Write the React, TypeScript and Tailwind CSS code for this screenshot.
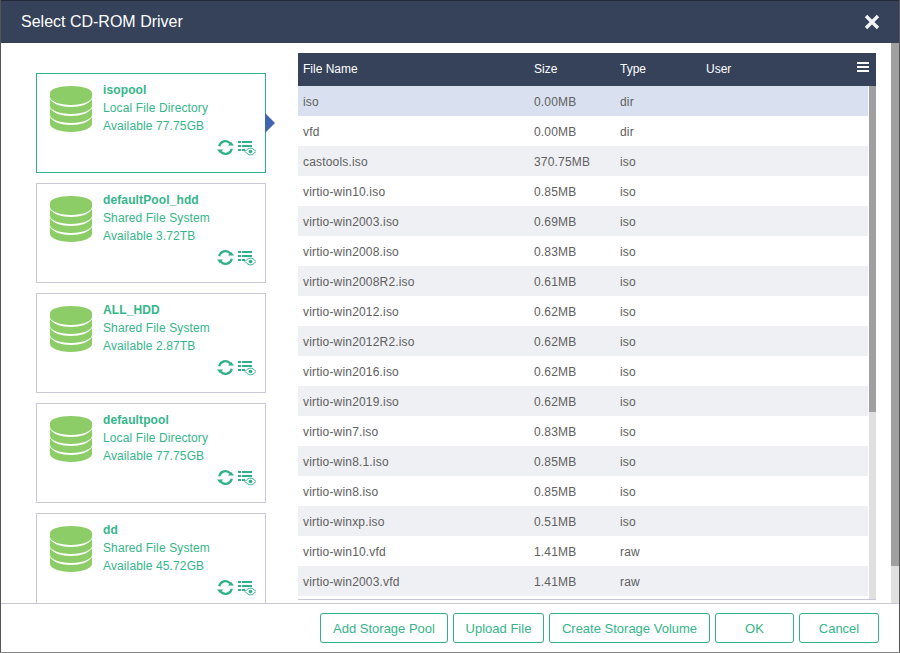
import React from "react";

const pools = [
  { name: "isopool", kind: "Local File Directory", avail: "Available 77.75GB", active: true },
  { name: "defaultPool_hdd", kind: "Shared File System", avail: "Available 3.72TB" },
  { name: "ALL_HDD", kind: "Shared File System", avail: "Available 2.87TB" },
  { name: "defaultpool", kind: "Local File Directory", avail: "Available 77.75GB" },
  { name: "dd", kind: "Shared File System", avail: "Available 45.72GB" },
];

const files = [
  ["iso", "0.00MB", "dir"],
  ["vfd", "0.00MB", "dir"],
  ["castools.iso", "370.75MB", "iso"],
  ["virtio-win10.iso", "0.85MB", "iso"],
  ["virtio-win2003.iso", "0.69MB", "iso"],
  ["virtio-win2008.iso", "0.83MB", "iso"],
  ["virtio-win2008R2.iso", "0.61MB", "iso"],
  ["virtio-win2012.iso", "0.62MB", "iso"],
  ["virtio-win2012R2.iso", "0.62MB", "iso"],
  ["virtio-win2016.iso", "0.62MB", "iso"],
  ["virtio-win2019.iso", "0.62MB", "iso"],
  ["virtio-win7.iso", "0.83MB", "iso"],
  ["virtio-win8.1.iso", "0.85MB", "iso"],
  ["virtio-win8.iso", "0.85MB", "iso"],
  ["virtio-winxp.iso", "0.51MB", "iso"],
  ["virtio-win10.vfd", "1.41MB", "raw"],
  ["virtio-win2003.vfd", "1.41MB", "raw"],
];

function DbIcon() {
  return (
    <svg width="42" height="46" viewBox="0 0 42 46" className="shrink-0">
      <path d="M0 7C0 3 9 0 21 0s21 3 21 7v4c0 4-9 8-21 8S0 15 0 11z" fill="#8ccd68" />
      <path d="M0 13c3 5 11 8 21 8s18-3 21-8v7c0 4-9 8-21 8S0 24 0 20z" fill="#8ccd68" />
      <path d="M0 22c3 5 11 8 21 8s18-3 21-8v7c0 4-9 8-21 8S0 33 0 29z" fill="#8ccd68" />
      <path d="M0 31c3 5 11 8 21 8s18-3 21-8v7c0 4-9 8-21 8S0 42 0 38z" fill="#8ccd68" />
    </svg>
  );
}

function RefreshIcon() {
  return (
    <svg width="17" height="17" viewBox="0 0 17 17" fill="none">
      <path d="M2.2 7.2A6.400 6.400 0 0 1 13.2 4.2" stroke="#2fb088" strokeWidth="2.2" />
      <path d="M14.8 9.8A6.400 6.400 0 0 1 3.8 12.8" stroke="#2fb088" strokeWidth="2.2" />
      <path d="M11 6.500h6L14 2.800z" fill="#2fb088" />
      <path d="M0 10.500h6L3 14.200z" fill="#2fb088" />
    </svg>
  );
}

function ListEyeIcon() {
  return (
    <svg width="18" height="15" viewBox="0 0 18 15" fill="none" className="mt-[2px]">
      <rect x="0" y="0" width="3" height="2" fill="#2fb088" />
      <rect x="4" y="0" width="10" height="2" fill="#2fb088" />
      <rect x="0" y="4" width="3" height="2" fill="#2fb088" />
      <rect x="4" y="4" width="10" height="2" fill="#2fb088" />
      <rect x="0" y="8" width="3" height="2" fill="#2fb088" />
      <rect x="4" y="8" width="3" height="2" fill="#2fb088" />
      <path d="M7 10.500C9 8 11 7.200 12.500 7.200S16 8 18 10.500c-2 2.500-4 3.300-5.500 3.300S9 13 7 10.500z" stroke="#2fb088" strokeWidth="1" />
      <circle cx="12.500" cy="10.500" r="1.800" fill="#2fb088" />
    </svg>
  );
}

function PoolCard(props: { pool: (typeof pools)[number] }) {
  const { pool } = props;
  return (
    <div className="relative w-[230px] shrink-0">
      <div
        className={`flex h-[100px] w-[230px] gap-[11px] border pl-[13px] pt-3 text-[12px] leading-[18px] tracking-[0.12px] text-[#35b58a] ${
          pool.active ? "border-[#2fb088]" : "border-[#c8c8d6]"
        }`}
      >
        <DbIcon />
        <div className="-mt-[5px]">
          <div className="font-bold">{pool.name}</div>
          <div>{pool.kind}</div>
          <div>{pool.avail}</div>
        </div>
        <div className="absolute right-[10px] top-[66px] flex items-start gap-[4px]">
          <RefreshIcon />
          <ListEyeIcon />
        </div>
      </div>
      {pool.active && (
        <div className="absolute left-[229px] top-[40px] h-0 w-0 border-y-[10px] border-l-[10px] border-y-transparent border-l-[#3f65b0]" />
      )}
    </div>
  );
}

function Btn(props: { label: string; w: string }) {
  return (
    <button className={`${props.w} h-[30px] rounded-[3px] border border-[#2fb088] bg-white pt-px text-[13px] text-[#35b58a]`}>
      {props.label}
    </button>
  );
}

export default function App() {
  return (
    <div
      className="flex h-[653px] w-[900px] flex-col overflow-hidden border-x border-b border-x-[#555] border-b-[#888] bg-white"
      style={{ fontFamily: '"Liberation Sans", Arial, sans-serif' }}
    >
      <div className="flex h-[43px] shrink-0 items-center justify-between border-t border-[#222a38] bg-[#35425a] pl-5 pr-[19px]">
        <span className="text-[16px] text-white">Select CD-ROM Driver</span>
        <svg width="16" height="16" viewBox="0 0 16 16">
          <path d="M2 2l12 12M14 2L2 14" stroke="#f2f2f2" strokeWidth="3.400" />
        </svg>
      </div>

      <div className="flex min-h-0 flex-1 overflow-hidden">
        <div className="flex w-[297px] shrink-0 flex-col gap-[10px] pl-[35px] pt-[30px]">
          {pools.map((pool) => (
            <PoolCard key={pool.name} pool={pool} />
          ))}
        </div>

        <div className="mt-[10px] flex h-[547px] w-[578px] shrink-0 flex-col border-b border-[#c8c8d6]">
          <div className="relative flex h-[33px] shrink-0 items-center bg-[#35425a] pb-[2px] text-[12px] text-white">
            <span className="w-[236px] pl-[5px]">File Name</span>
            <span className="w-[86px]">Size</span>
            <span className="w-[86px]">Type</span>
            <span>User</span>
            <div className="absolute right-[7px] top-[9px] flex w-[12px] flex-col gap-[2px]">
              <div className="h-[2px] bg-white" />
              <div className="h-[2px] bg-white" />
              <div className="h-[2px] bg-white" />
            </div>
          </div>
          <div className="flex min-h-0 flex-1">
            <div className="w-[570px] shrink-0">
              {files.map((f, index) => (
                <div
                  key={f[0]}
                  className={`flex h-[30px] items-center pt-[2px] text-[12px] tracking-[0.18px] text-[#606060] ${
                    index === 0 ? "bg-[#d9e0ef]" : index % 2 === 0 ? "bg-[#eff0f4]" : "bg-white"
                  }`}
                >
                  <span className="w-[236px] pl-[5px]">{f[0]}</span>
                  <span className="w-[86px]">{f[1]}</span>
                  <span>{f[2]}</span>
                </div>
              ))}
            </div>
            <div className="ml-px flex w-[7px] flex-col bg-[#e0e0e0]">
              <div className="h-[326px] bg-[#a0a0a0]" />
            </div>
          </div>
        </div>

        <div className="ml-[15px] flex w-[8px] shrink-0 flex-col bg-[#e0e0e0]">
          <div className="h-[523px] bg-[#a0a0a0]" />
        </div>
      </div>

      <div className="flex h-[49px] shrink-0 items-start justify-end gap-[5px] border-t border-[#c8c8d6] pr-[20px] pt-[9px]">
        <Btn label="Add Storage Pool" w="w-[128px]" />
        <Btn label="Upload File" w="w-[91px]" />
        <Btn label="Create Storage Volume" w="w-[161px]" />
        <Btn label="OK" w="w-[79px]" />
        <Btn label="Cancel" w="w-[80px]" />
      </div>
    </div>
  );
}
